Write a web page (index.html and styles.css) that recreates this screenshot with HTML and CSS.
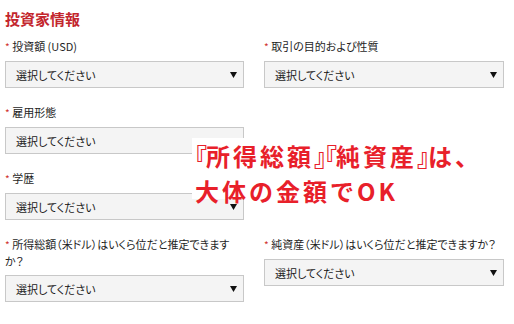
FILE: index.html
```html
<!DOCTYPE html>
<html lang="ja">
<head>
<meta charset="utf-8">
<link rel="stylesheet" href="styles.css">
</head>
<body>
<div class="page">
  <h2 class="title">投資家情報</h2>
  <div class="grid">
    <div class="field">
      <div class="label"><span class="req">*</span> 投資額 (USD)</div>
      <div class="select"><span>選択してください</span><svg class="arrow" width="7" height="6" viewBox="0 0 7 6"><polygon points="0,0 7,0 3.5,6" fill="#111"/></svg></div>
    </div>
    <div class="field">
      <div class="label"><span class="req">*</span> 取引の目的および性質</div>
      <div class="select"><span>選択してください</span><svg class="arrow" width="7" height="6" viewBox="0 0 7 6"><polygon points="0,0 7,0 3.5,6" fill="#111"/></svg></div>
    </div>
    <div class="field">
      <div class="label"><span class="req">*</span> 雇用形態</div>
      <div class="select"><span>選択してください</span><svg class="arrow" width="7" height="6" viewBox="0 0 7 6"><polygon points="0,0 7,0 3.5,6" fill="#111"/></svg></div>
    </div>
    <div class="field empty"></div>
    <div class="field">
      <div class="label"><span class="req">*</span> 学歴</div>
      <div class="select"><span>選択してください</span><svg class="arrow" width="7" height="6" viewBox="0 0 7 6"><polygon points="0,0 7,0 3.5,6" fill="#111"/></svg></div>
    </div>
    <div class="field empty"></div>
    <div class="field">
      <div class="label"><span class="req">*</span> 所得総額（米ドル）はいくら位だと推定できますか？</div>
      <div class="select"><span>選択してください</span><svg class="arrow" width="7" height="6" viewBox="0 0 7 6"><polygon points="0,0 7,0 3.5,6" fill="#111"/></svg></div>
    </div>
    <div class="field">
      <div class="label"><span class="req">*</span> 純資産（米ドル）はいくら位だと推定できますか？</div>
      <div class="select"><span>選択してください</span><svg class="arrow" width="7" height="6" viewBox="0 0 7 6"><polygon points="0,0 7,0 3.5,6" fill="#111"/></svg></div>
    </div>
  </div>
  <div class="note"><span class="br">『</span>所得総額<span class="br">』</span><span class="br">『</span>純資産<span class="br">』</span>は、<br>大体の金額でOK</div>
</div>
</body>
</html>
```
FILE: styles.css
```css
html, body {
  margin: 0;
  padding: 0;
  background: #ffffff;
}
body {
  font-family: "Noto Sans CJK JP", "Noto Sans", sans-serif;
  color: #222222;
}
.page {
  position: relative;
  padding: 9px 5px 0 5px;
}
.title {
  margin: 0 0 9px 0;
  font-size: 15px;
  line-height: 20px;
  font-weight: 700;
  color: #c3262d;
}
.grid {
  display: grid;
  grid-template-columns: 239px 240px;
  column-gap: 20px;
  row-gap: 16px;
  align-items: start;
}
.label {
  font-size: 11px;
  line-height: 16px;
  font-feature-settings: "palt";
  margin-bottom: 6px;
  color: #1e1e1e;
}
.req {
  color: #d0312d;
  font-size: 10px;
}
.select {
  box-sizing: border-box;
  height: 27px;
  border: 1px solid #c8c8c8;
  background: #f4f4f4;
  display: flex;
  align-items: center;
  justify-content: space-between;
  padding: 0 6px 0 10px;
  font-size: 11px;
  font-feature-settings: "palt";
  color: #1a1a1a;
}
.arrow {
  display: block;
}
.note {
  position: absolute;
  left: 192px;
  top: 138px;
  height: 61px;
  padding-left: 3px;
  padding-right: 4px;
  background: #ffffff;
  font-size: 24px;
  line-height: 35px;
  font-weight: 700;
  letter-spacing: 3px;
  color: #e8202a;
  white-space: nowrap;
}
.br {
  font-feature-settings: "halt";
  letter-spacing: -1px;
}
```
